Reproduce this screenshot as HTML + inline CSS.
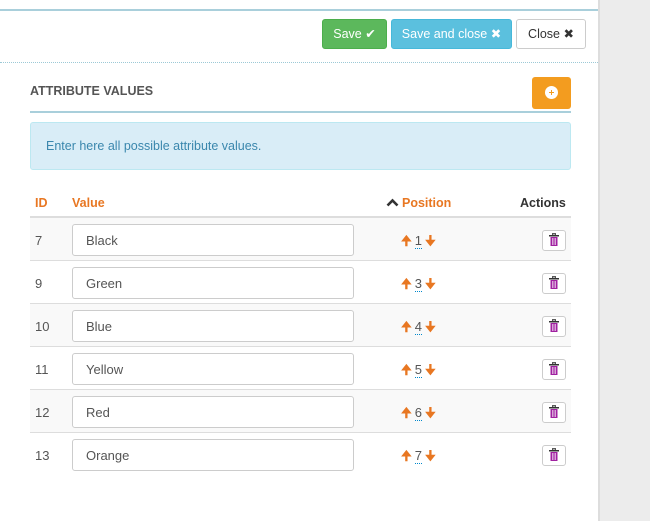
<!DOCTYPE html>
<html><head><style>
*{box-sizing:border-box;margin:0;padding:0}
body{width:650px;height:521px;background:#fff;font-family:"Liberation Sans",sans-serif;font-size:13px;color:#555;position:relative;overflow:hidden}
.side{position:absolute;left:598px;top:0;width:52px;height:521px;background:#ececec;border-left:2px solid #ddd}
.topline{position:absolute;left:0;top:9px;width:598px;height:2px;background:#a9cfdb}
.dots{position:absolute;left:0;top:62px;width:598px;border-top:1px dotted #9cc9d6}
.btn{position:absolute;top:19px;height:30px;border-radius:3px;font-size:12.5px;line-height:28px;text-align:center;border:1px solid}
.title{position:absolute;left:30px;top:84px;font-size:12.5px;font-weight:bold;color:#555}
.hl{position:absolute;left:30px;top:111px;width:541px;height:2px;background:#a9cfdb}
.add{position:absolute;left:532px;top:77px;width:39px;height:32px;background:#f39c1f;border-radius:3px}
.add:after{content:"";position:absolute;left:13px;top:9px;width:13px;height:13px;border-radius:50%;background:#fff}
.add i{position:absolute;left:17px;top:15px;width:5px;height:1px;z-index:2;background:#f39c1f}
.add b{position:absolute;left:19px;top:13px;width:1px;height:5px;z-index:2;background:#f39c1f}
.info{position:absolute;left:30px;top:122px;width:541px;height:48px;background:#d9edf7;border:1px solid #bce8f1;border-radius:3px;color:#3a87ad;font-size:12.5px;padding:16px 15px}
.th{position:absolute;top:196px;font-weight:bold;font-size:12.5px;color:#e87722}
.hline{position:absolute;left:30px;top:216px;width:541px;height:2px;background:#ddd}
.row{position:absolute;left:30px;width:541px;height:43px;border-bottom:1px solid #ddd}
.row .id{position:absolute;left:5px;top:15px}
.row .in{position:absolute;left:42px;top:6px;width:282px;height:32px;border:1px solid #ccc;border-radius:3px;background:#fff;padding:8px 13px;color:#555}
.row .pos{position:absolute;left:371px;top:14px;color:#555}
.row .pos u{text-decoration:none;border-bottom:1px dotted #08c;margin:0 3px}
.ar{color:#e87722;font-weight:bold}
.tr{position:absolute;left:512px;top:12px;width:24px;height:21px;border:1px solid #ccc;border-radius:3px;background:#fff}
</style></head><body>
<div class="side"></div>
<div class="topline"></div>
<div class="btn" style="left:322px;width:65px;background:#5cb85c;border-color:#4cae4c;color:#fff">Save ✔</div>
<div class="btn" style="left:391px;width:121px;background:#5bc0de;border-color:#46b8da;color:#fff">Save and close ✖</div>
<div class="btn" style="left:516px;width:70px;background:#fff;border-color:#ccc;color:#333">Close ✖</div>
<div class="dots"></div>
<div class="title">ATTRIBUTE VALUES</div>
<div class="add"><i></i><b></b></div>
<div class="hl"></div>
<div class="info">Enter here all possible attribute values.</div>
<div class="th" style="left:35px">ID</div>
<div class="th" style="left:72px">Value</div>
<div class="th" style="left:386px"><svg width="13" height="9" style="margin-right:3px"><path d="M1.5 7.5L6.5 2.5L11.5 7.5" stroke="#333" stroke-width="2.6" fill="none"/></svg>Position</div>
<div class="th" style="left:520px;color:#333">Actions</div>
<div class="hline"></div>
<div class="row" style="top:218px;background:#f9f9f9"><span class="id">7</span><div class="in">Black</div><div class="pos"><span class="ar">🠉</span><u>1</u><span class="ar">🠋</span></div><div class="tr"><svg width="22" height="19"><rect x="7.5" y="6" width="7" height="9" fill="#a020a0"/><rect x="6" y="4" width="10" height="1.5" fill="#333"/><rect x="9.5" y="2.5" width="3" height="1.5" fill="none" stroke="#333" stroke-width=".8"/><path d="M9.5 7v7M11 7v7M12.5 7v7" stroke="#fff" stroke-width=".6"/></svg></div></div>
<div class="row" style="top:261px"><span class="id">9</span><div class="in">Green</div><div class="pos"><span class="ar">🠉</span><u>3</u><span class="ar">🠋</span></div><div class="tr"><svg width="22" height="19"><rect x="7.5" y="6" width="7" height="9" fill="#a020a0"/><rect x="6" y="4" width="10" height="1.5" fill="#333"/><rect x="9.5" y="2.5" width="3" height="1.5" fill="none" stroke="#333" stroke-width=".8"/><path d="M9.5 7v7M11 7v7M12.5 7v7" stroke="#fff" stroke-width=".6"/></svg></div></div>
<div class="row" style="top:304px;background:#f9f9f9"><span class="id">10</span><div class="in">Blue</div><div class="pos"><span class="ar">🠉</span><u>4</u><span class="ar">🠋</span></div><div class="tr"><svg width="22" height="19"><rect x="7.5" y="6" width="7" height="9" fill="#a020a0"/><rect x="6" y="4" width="10" height="1.5" fill="#333"/><rect x="9.5" y="2.5" width="3" height="1.5" fill="none" stroke="#333" stroke-width=".8"/><path d="M9.5 7v7M11 7v7M12.5 7v7" stroke="#fff" stroke-width=".6"/></svg></div></div>
<div class="row" style="top:347px"><span class="id">11</span><div class="in">Yellow</div><div class="pos"><span class="ar">🠉</span><u>5</u><span class="ar">🠋</span></div><div class="tr"><svg width="22" height="19"><rect x="7.5" y="6" width="7" height="9" fill="#a020a0"/><rect x="6" y="4" width="10" height="1.5" fill="#333"/><rect x="9.5" y="2.5" width="3" height="1.5" fill="none" stroke="#333" stroke-width=".8"/><path d="M9.5 7v7M11 7v7M12.5 7v7" stroke="#fff" stroke-width=".6"/></svg></div></div>
<div class="row" style="top:390px;background:#f9f9f9"><span class="id">12</span><div class="in">Red</div><div class="pos"><span class="ar">🠉</span><u>6</u><span class="ar">🠋</span></div><div class="tr"><svg width="22" height="19"><rect x="7.5" y="6" width="7" height="9" fill="#a020a0"/><rect x="6" y="4" width="10" height="1.5" fill="#333"/><rect x="9.5" y="2.5" width="3" height="1.5" fill="none" stroke="#333" stroke-width=".8"/><path d="M9.5 7v7M11 7v7M12.5 7v7" stroke="#fff" stroke-width=".6"/></svg></div></div>
<div class="row" style="top:433px;border-bottom:none"><span class="id">13</span><div class="in">Orange</div><div class="pos"><span class="ar">🠉</span><u>7</u><span class="ar">🠋</span></div><div class="tr"><svg width="22" height="19"><rect x="7.5" y="6" width="7" height="9" fill="#a020a0"/><rect x="6" y="4" width="10" height="1.5" fill="#333"/><rect x="9.5" y="2.5" width="3" height="1.5" fill="none" stroke="#333" stroke-width=".8"/><path d="M9.5 7v7M11 7v7M12.5 7v7" stroke="#fff" stroke-width=".6"/></svg></div></div>
</body></html>
